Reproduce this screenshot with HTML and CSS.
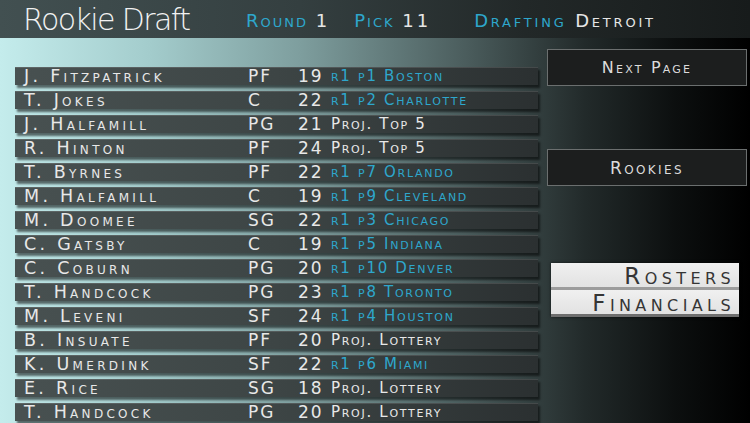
FILE: index.html
```html
<!DOCTYPE html>
<html>
<head>
<meta charset="utf-8">
<link rel="stylesheet" href="styles.css">
</head>
<body>
<div class="screen">
  <header class="topbar">
    <div class="logo">Rookie Draft</div>
    <div class="stat"><span class="hl">Round</span> 1</div>
    <div class="stat pick"><span class="hl">Pick</span> <span class="num">11</span></div>
    <div class="stat drafting"><span class="hl">Drafting</span> Detroit</div>
  </header>
  <main class="main">
    <section class="list">
      <div class="row"><span class="name">J. Fitzpatrick</span><span class="pos">PF</span><span class="age">19</span><span class="info pk">r1 p1 Boston</span></div>
      <div class="row"><span class="name">T. Jokes</span><span class="pos">C</span><span class="age">22</span><span class="info pk">r1 p2 Charlotte</span></div>
      <div class="row"><span class="name">J. Halfamill</span><span class="pos">PG</span><span class="age">21</span><span class="info">Proj. Top 5</span></div>
      <div class="row"><span class="name">R. Hinton</span><span class="pos">PF</span><span class="age">24</span><span class="info">Proj. Top 5</span></div>
      <div class="row"><span class="name">T. Byrnes</span><span class="pos">PF</span><span class="age">22</span><span class="info pk">r1 p7 Orlando</span></div>
      <div class="row"><span class="name">M. Halfamill</span><span class="pos">C</span><span class="age">19</span><span class="info pk">r1 p9 Cleveland</span></div>
      <div class="row"><span class="name">M. Doomee</span><span class="pos">SG</span><span class="age">22</span><span class="info pk">r1 p3 Chicago</span></div>
      <div class="row"><span class="name">C. Gatsby</span><span class="pos">C</span><span class="age">19</span><span class="info pk">r1 p5 Indiana</span></div>
      <div class="row"><span class="name">C. Coburn</span><span class="pos">PG</span><span class="age">20</span><span class="info pk">r1 p10 Denver</span></div>
      <div class="row"><span class="name">T. Handcock</span><span class="pos">PG</span><span class="age">23</span><span class="info pk">r1 p8 Toronto</span></div>
      <div class="row"><span class="name">M. Leveni</span><span class="pos">SF</span><span class="age">24</span><span class="info pk">r1 p4 Houston</span></div>
      <div class="row"><span class="name">B. Insuate</span><span class="pos">PF</span><span class="age">20</span><span class="info">Proj. Lottery</span></div>
      <div class="row"><span class="name">K. Umerdink</span><span class="pos">SF</span><span class="age">22</span><span class="info pk">r1 p6 Miami</span></div>
      <div class="row"><span class="name">E. Rice</span><span class="pos">SG</span><span class="age">18</span><span class="info">Proj. Lottery</span></div>
      <div class="row"><span class="name">T. Handcock</span><span class="pos">PG</span><span class="age">20</span><span class="info">Proj. Lottery</span></div>
    </section>
    <aside class="side">
      <div class="btn next">Next Page</div>
      <div class="btn rookies">Rookies</div>
      <div class="tabs">
        <div class="tab">Rosters</div>
        <div class="tab">Financials</div>
      </div>
    </aside>
  </main>
</div>
</body>
</html>
```
FILE: styles.css
```css
html, body {
  margin: 0;
  padding: 0;
  background: #000;
}
.screen {
  width: 750px;
  height: 423px;
  overflow: hidden;
  font-family: "DejaVu Sans", sans-serif;
  font-variant: small-caps;
  background: linear-gradient(to right, #c4ecec 0%, #a3cccc 20%, #7e9e9e 40%, #4b5d5d 62%, #222a2a 78%, #0c0f0f 90%, #000 100%);
}
.topbar {
  height: 38px;
  display: flex;
  align-items: center;
  background: linear-gradient(to right, #425051 0%, #343f40 40%, #222828 70%, #171b1b 100%);
  color: #e6e6e6;
  font-size: 18px;
  letter-spacing: 2px;
}
.logo {
  font-variant: normal;
  font-family: "DejaVu Sans", sans-serif;
  font-weight: 200;
  font-size: 30px;
  letter-spacing: -1.6px;
  color: #f2f2f2;
  margin-left: 23px;
  width: 223px;
}
.hl { color: #2ea7cc; }
.stat { padding-top: 2px; }
.pick { margin-left: 25px; }
.num { letter-spacing: 3px; }
.drafting { margin-left: 43px; letter-spacing: 2.8px; }
.main {
  display: flex;
  gap: 9px;
}
.list {
  margin-left: 15px;
  width: 523px;
  padding-top: 29px;
  display: flex;
  flex-direction: column;
  gap: 6px;
}
.row {
  height: 17px;
  flex: none;
  display: grid;
  grid-template-columns: 224px 50px 33px 1fr;
  align-items: center;
  padding-left: 9px;
  background: linear-gradient(to right, #485151 0%, #3d4545 50%, #2b3031 100%);
  border-top: 1px solid rgba(255,255,255,0.12);
  box-shadow: 2px 3px 2px rgba(0,0,0,0.55);
  color: #e8e8e8;
  font-size: 17.5px;
  letter-spacing: 3.3px;
  line-height: 17px;
  white-space: nowrap;
}
.row .pos, .row .age { letter-spacing: 2px; font-size: 17px; }
.row .info { font-size: 15px; letter-spacing: 1.7px; }
.row .pk { color: #2ea7cc; }
.side {
  display: flex;
  flex-direction: column;
  width: 200px;
  padding-top: 11px;
}
.btn {
  height: 35px;
  box-sizing: content-box;
  border: 1px solid #6b6f6f;
  background: #1c1e1e;
  color: #dcdcdc;
  font-size: 16px;
  letter-spacing: 2.2px;
  display: flex;
  align-items: center;
  justify-content: center;
}
.rookies { margin-top: 63px; font-size: 17px; letter-spacing: 2.4px; }
.tabs {
  margin-top: 77px;
  margin-left: 4px;
  width: 188px;
  box-shadow: 0 0 3px rgba(0,0,0,0.6);
}
.tab {
  height: 24px;
  background: linear-gradient(to bottom, #f0f0f0, #e2e2e2);
  border-bottom: 3px solid #9c9c9c;
  color: #353535;
  font-size: 23px;
  line-height: 26px;
  text-align: right;
  padding-right: 4px;
  letter-spacing: 4.4px;
}
.tab + .tab { border-bottom-color: #6e6e6e; }
```
